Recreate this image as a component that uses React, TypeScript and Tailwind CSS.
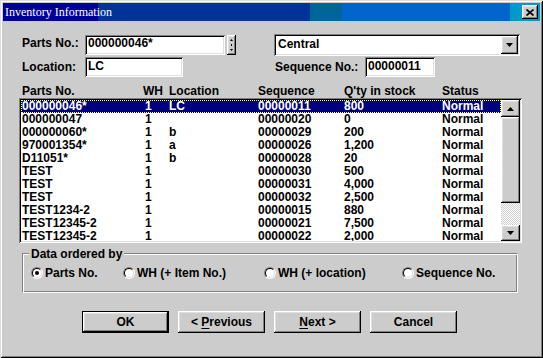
const ui = "font-['Liberation_Sans',Arial,sans-serif] font-bold text-[12px] text-black";

const raised =
  "bg-[#cccccc] shadow-[inset_-1px_-1px_0_#000,inset_1px_1px_0_#fff,inset_-2px_-2px_0_#808080,inset_2px_2px_0_#dfdfdf]";
const sunken =
  "bg-white shadow-[inset_1px_1px_0_#808080,inset_-1px_-1px_0_#fff,inset_2px_2px_0_#000,inset_-2px_-2px_0_#dfdfdf]";

const rows = [
  ["000000046*", "1", "LC", "00000011", "800", "Normal"],
  ["000000047", "1", "", "00000020", "0", "Normal"],
  ["000000060*", "1", "b", "00000029", "200", "Normal"],
  ["970001354*", "1", "a", "00000026", "1,200", "Normal"],
  ["D11051*", "1", "b", "00000028", "20", "Normal"],
  ["TEST", "1", "", "00000030", "500", "Normal"],
  ["TEST", "1", "", "00000031", "4,000", "Normal"],
  ["TEST", "1", "", "00000032", "2,500", "Normal"],
  ["TEST1234-2", "1", "", "00000015", "880", "Normal"],
  ["TEST12345-2", "1", "", "00000021", "7,500", "Normal"],
  ["TEST12345-2", "1", "", "00000022", "2,000", "Normal"],
];

function Arrow({ up }: { up?: boolean }) {
  return (
    <svg width="7" height="4" viewBox="0 0 7 4">
      <path d={up ? "M3.5 0 L7 4 L0 4 Z" : "M0 0 L7 0 L3.5 4 Z"} fill="#000" />
    </svg>
  );
}

function Radio({ checked, label, width }: { checked?: boolean; label: string; width: string }) {
  return (
    <div className={`flex items-center gap-[2px] ${width}`}>
      <div className="w-[12px] h-[12px] rounded-full border border-[#808080] border-r-white border-b-white flex">
        <div className="flex-1 rounded-full border border-black border-r-[#dfdfdf] border-b-[#dfdfdf] bg-white flex items-center justify-center">
          {checked && <div className="w-[4px] h-[4px] rounded-full bg-black" />}
        </div>
      </div>
      <span className="leading-[14px]">{label}</span>
    </div>
  );
}

function Button({ children, isDefault }: { children: React.ReactNode; isDefault?: boolean }) {
  return (
    <div className={`w-[87px] h-[22px] ${isDefault ? "border border-black" : ""} flex`}>
      <div className={`flex-1 flex items-center justify-center leading-[14px] ${raised}`}>{children}</div>
    </div>
  );
}

export default function App() {
  return (
    <div
      className={`w-[543px] h-[358px] bg-[#cccccc] p-[3px] flex flex-col shadow-[inset_1px_1px_0_#dfdfdf,inset_-1px_-1px_0_#000,inset_2px_2px_0_#fff,inset_-2px_-2px_0_#808080] ${ui}`}
    >
      {/* Title bar */}
      <div className="h-[18px] flex items-center justify-between bg-[linear-gradient(to_right,#000099_0_95px,#003399_95px_307px,#006699_307px_339px,#0066cc_339px_507px,#0099cc_507px)]">
        <span className="pl-[2px] font-['Liberation_Serif','Times_New_Roman',serif] font-normal text-[12px] leading-[14px] text-white">
          Inventory Information
        </span>
        <div className={`mr-[2px] w-[16px] h-[14px] flex items-center justify-center ${raised}`}>
          <svg width="8" height="7" viewBox="0 0 8 7">
            <path d="M0.5 0.5 L7.5 6.5 M7.5 0.5 L0.5 6.5" stroke="#000" strokeWidth="1.6" />
          </svg>
        </div>
      </div>

      <div className="flex flex-col pl-[16px]">
        {/* Parts No. row */}
        <div className="mt-[13px] h-[22px] flex items-start ml-[3px]">
          <span className="w-[63px] mt-[2px] leading-[14px]">Parts No.:</span>
          <div className={`w-[140px] h-[20px] mt-[1px] px-[3px] pt-[1px] leading-[14px] ${sunken}`}>000000046*</div>
          <div className={`ml-[2px] mt-[1px] w-[9px] h-[20px] flex flex-col items-center justify-center gap-[3px] ${raised}`}>
            <svg width="3" height="2" viewBox="0 0 3 2">
              <path d="M1.5 0 L3 2 L0 2 Z" fill="#000" />
            </svg>
            <div className="w-[1px] h-[2px] bg-black" />
            <svg width="3" height="2" viewBox="0 0 3 2">
              <path d="M0 0 L3 0 L1.5 2 Z" fill="#000" />
            </svg>
          </div>
          <div className={`ml-[38px] w-[246px] h-[22px] p-[2px] flex ${sunken}`}>
            <span className="flex-1 pl-[2px] pt-[1px] leading-[14px]">Central</span>
            <div className={`w-[17px] h-[18px] flex items-center justify-center ${raised}`}>
              <Arrow />
            </div>
          </div>
        </div>

        {/* Location row */}
        <div className="mt-[1px] h-[20px] flex items-start ml-[3px]">
          <span className="w-[63px] mt-[3px] leading-[14px]">Location:</span>
          <div className={`w-[98px] h-[20px] px-[3px] pt-[2px] leading-[14px] ${sunken}`}>LC</div>
          <span className="ml-[92px] w-[90px] mt-[3px] leading-[14px]">Sequence No.:</span>
          <div className={`w-[70px] h-[20px] px-[3px] pt-[2px] leading-[14px] ${sunken}`}>00000011</div>
        </div>

        {/* Column header */}
        <div className="mt-[7px] h-[14px] flex ml-[3px] leading-[14px]">
          <span className="w-[121px]">Parts No.</span>
          <span className="w-[26px]">WH</span>
          <span className="w-[89px]">Location</span>
          <span className="w-[86px]">Sequence</span>
          <span className="w-[98px]">Q'ty in stock</span>
          <span>Status</span>
        </div>

        {/* List */}
        <div className={`w-[503px] h-[145px] p-[2px] flex ${sunken}`}>
          <div className="w-[480px] h-[141px] overflow-hidden flex flex-col">
            {rows.map((r, i) => (
              <div
                key={i}
                className={`h-[13px] shrink-0 flex pl-[1px] leading-[13px] ${
                  i === 0 ? "bg-[#000080] text-white outline-1 outline-dotted outline-offset-[-1px] outline-[#ffff7f]" : ""
                }`}
              >
                <span className="w-[121px] shrink-0">{r[0]}</span>
                <span className="w-[26px] shrink-0 pl-[2px]">{r[1]}</span>
                <span className="w-[89px] shrink-0">{r[2]}</span>
                <span className="w-[86px] shrink-0">{r[3]}</span>
                <span className="w-[98px] shrink-0">{r[4]}</span>
                <span>{r[5]}</span>
              </div>
            ))}
          </div>
          <div className="w-[19px] flex flex-col">
            <div className={`h-[17px] flex items-center justify-center ${raised}`}>
              <Arrow up />
            </div>
            <div className={`h-[86px] ${raised}`} />
            <div className="h-[22px] bg-[repeating-conic-gradient(#ffffff_0_25%,#cccccc_0_50%)] bg-[length:2px_2px]" />
            <div className={`h-[16px] flex items-center justify-center ${raised}`}>
              <Arrow />
            </div>
          </div>
        </div>

        {/* Data ordered by */}
        <div className="relative mt-[10px] ml-[3px] w-[496px] h-[40px] border border-[#808080] border-r-white border-b-white shadow-[inset_1px_1px_0_#fff,inset_-1px_-1px_0_#808080] flex items-center pl-[8px]">
          <span className="absolute -top-[7px] left-[6px] px-[2px] bg-[#cccccc] leading-[14px]">Data ordered by</span>
          <Radio checked label="Parts No." width="w-[92px]" />
          <Radio label="WH (+ Item No.)" width="w-[141px]" />
          <Radio label="WH (+ location)" width="w-[138px]" />
          <Radio label="Sequence No." width="w-[100px]" />
        </div>

        {/* Buttons */}
        <div className="mt-[18px] ml-[63px] flex gap-[9px]">
          <Button isDefault>OK</Button>
          <Button>
            &lt;&nbsp;<span className="underline underline-offset-2">P</span>revious
          </Button>
          <Button>
            <span className="underline underline-offset-2">N</span>ext&nbsp;&gt;
          </Button>
          <Button>Cancel</Button>
        </div>
      </div>
    </div>
  );
}
